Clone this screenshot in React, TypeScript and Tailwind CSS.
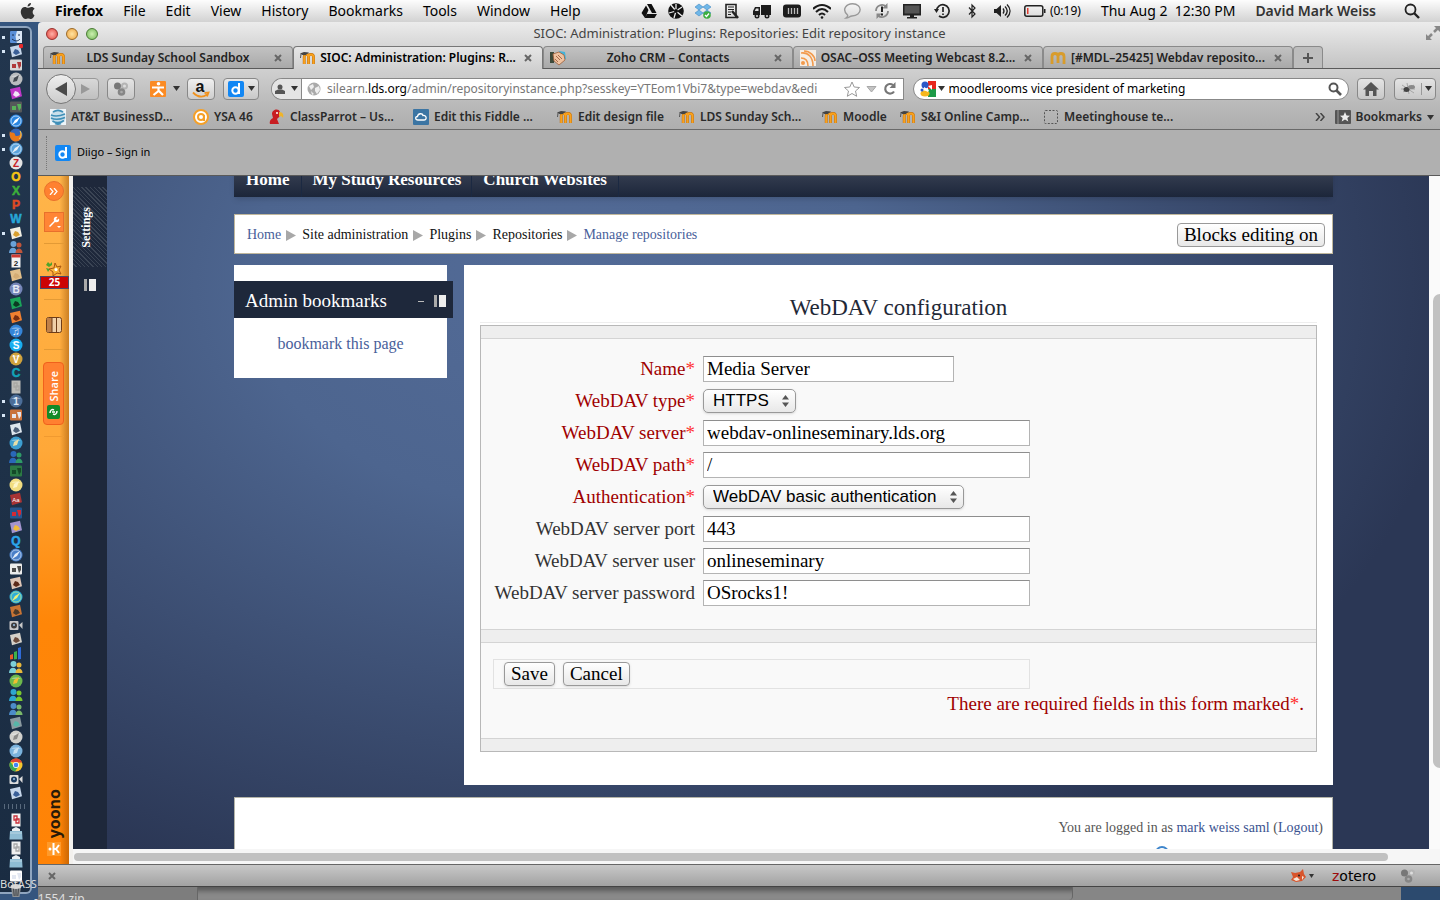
import React from "react";

type Kind =
  | "round"
  | "tile"
  | "tilt"
  | "letter"
  | "people"
  | "chrome"
  | "camera"
  | "folder"
  | "doc"
  | "trash"
  | "chart"
  | "compass"
  | "finder"
  | "fox";

interface DockItem {
  kind: Kind;
  a: string;
  b: string;
  glyph?: string;
  running?: boolean;
}

const dockItems: DockItem[] = [
  { kind: "finder", a: "#5a8fd8", b: "#dbe7f5", running: true },
  { kind: "tilt", a: "#c6d6ea", b: "#3a5f98", glyph: "badge", running: true },
  { kind: "tile", a: "#d8d8d8", b: "#b03a3a" },
  { kind: "round", a: "#b9bcbe", b: "#444a50" },
  { kind: "tilt", a: "#c038c8", b: "#f3e6f7" },
  { kind: "tile", a: "#55585a", b: "#58b05a" },
  { kind: "compass", a: "#2a86e0", b: "#ffffff" },
  { kind: "fox", a: "#e8781a", b: "#3566b8", running: true },
  { kind: "compass", a: "#5ba3dc", b: "#e9f1f6", running: true },
  { kind: "round", a: "#e4e4e4", b: "#c62026", glyph: "Z" },
  { kind: "letter", a: "#f5c414", b: "", glyph: "O" },
  { kind: "letter", a: "#3cae3a", b: "", glyph: "X" },
  { kind: "letter", a: "#e04a24", b: "", glyph: "P" },
  { kind: "letter", a: "#27a6d8", b: "", glyph: "W" },
  { kind: "tilt", a: "#f2efe4", b: "#d8a030", running: true },
  { kind: "people", a: "#6aa2d8", b: "#c0553a" },
  { kind: "doc", a: "#f4f4f4", b: "#cf3b34", glyph: "2" },
  { kind: "tilt", a: "#e2bf8a", b: "#d4ac74" },
  { kind: "round", a: "#7585b8", b: "#e6eaf5", glyph: "B" },
  { kind: "tilt", a: "#1aa55a", b: "#0b3a22" },
  { kind: "tilt", a: "#f08030", b: "#7a2e10" },
  { kind: "round", a: "#3585d8", b: "#ffffff", glyph: "♫" },
  { kind: "round", a: "#18aef0", b: "#ffffff", glyph: "S" },
  { kind: "round", a: "#cfa23c", b: "#ffffff", glyph: "V" },
  { kind: "letter", a: "#12a3b8", b: "", glyph: "C" },
  { kind: "doc", a: "#bcbcb8", b: "#a8a8a4" },
  { kind: "round", a: "#4b6d98", b: "#dfe8f4", glyph: "1", running: true },
  { kind: "tile", a: "#c9713c", b: "#e5e5ee", running: true },
  { kind: "tilt", a: "#dde6ee", b: "#4c5f78" },
  { kind: "round", a: "#3c9ed0", b: "#e8dfa8" },
  { kind: "people", a: "#2a68b8", b: "#2f9a68" },
  { kind: "tile", a: "#2c7a44", b: "#144a28" },
  { kind: "round", a: "#f1dd80", b: "#fdf5c8" },
  { kind: "tilt", a: "#a83434", b: "#a83434", glyph: "Aa" },
  { kind: "tile", a: "#25568f", b: "#d42a34" },
  { kind: "tilt", a: "#a495d0", b: "#f0bc3c" },
  { kind: "letter", a: "#2ba6ec", b: "", glyph: "Q" },
  { kind: "compass", a: "#4a7fc8", b: "#e5eefa" },
  { kind: "tile", a: "#ececec", b: "#4c4c4c" },
  { kind: "tilt", a: "#dec6b8", b: "#5c2a1a" },
  { kind: "compass", a: "#2faed8", b: "#e8f07a" },
  { kind: "tilt", a: "#c87434", b: "#4b3a2a" },
  { kind: "camera", a: "#c8c8c8", b: "#3e3e3e" },
  { kind: "tilt", a: "#d4d0c8", b: "#6b4a3a" },
  { kind: "chart", a: "#3eb04a", b: "#2f6bd8" },
  { kind: "people", a: "#7cd0d8", b: "#e8b83c" },
  { kind: "round", a: "#6cb84c", b: "#f0c030" },
  { kind: "people", a: "#2fa6d0", b: "#7ac830" },
  { kind: "people", a: "#4c8cc8", b: "#7ab86a" },
  { kind: "tilt", a: "#8a9aa0", b: "#57b5a8" },
  { kind: "round", a: "#d0d0cc", b: "#8a8a88" },
  { kind: "round", a: "#7ab2dc", b: "#c7e0f2" },
  { kind: "chrome", a: "", b: "" },
  { kind: "camera", a: "#dcdcdc", b: "#1c3c60" },
  { kind: "tilt", a: "#c6d6ea", b: "#3a5f98" },
];

const dockFiles: DockItem[] = [
  { kind: "doc", a: "#f4f4f4", b: "#c8303a" },
  { kind: "folder", a: "#8fbcd4", b: "#e9eef2" },
  { kind: "doc", a: "#f0f0f0", b: "#a8a8a8" },
  { kind: "folder", a: "#8fbcd4", b: "#e9eef2" },
  { kind: "tile", a: "#ffffff", b: "#e3e8f2" },
  { kind: "trash", a: "#8d9093", b: "#d6d6d6" },
];

const drawShape = ({ kind, a, b, glyph }: DockItem) => {
  switch (kind) {
    case "finder":
      return (
        <>
          <rect x="1" y="1" width="12" height="12" rx="1" fill={a} />
          <path d="M8 1h5v12H8C6.500 9 7 7 6.500 7 7 4 7.500 2.500 8 1z" fill={b} />
          <path d="M4 4v2M10 4v2M3 9c3 2.500 6 2.500 8 0" stroke="#1b2f50" fill="none" />
        </>
      );
    case "round":
      return (
        <>
          <circle cx="7" cy="7" r="6.500" fill={a} />
          <path d="M2 5a6 4 0 0 1 10 0" fill="#fff" opacity=".35" />
          {glyph ? (
            <text x="7" y="10.500" textAnchor="middle" fontSize="10" fontWeight="700" fill={b}>
              {glyph}
            </text>
          ) : (
            <path d="M4 10l1-4 5-3-2 6z" fill={b} />
          )}
        </>
      );
    case "compass":
      return (
        <>
          <circle cx="7" cy="7" r="6.500" fill={a} />
          <circle cx="7" cy="7" r="5" fill="none" stroke={b} opacity=".6" />
          <path d="M3 11l3-5 5-3-3 5z" fill={b} />
        </>
      );
    case "fox":
      return (
        <>
          <circle cx="7" cy="7" r="6.500" fill={b} />
          <path d="M1 3c0 2 2 1 4 2s0 3 3 3 4-2 3-5c3 4 2 10-4 10.500C2 13.500-.5 8 1 3z" fill={a} />
          <path d="M11 3c2 3 1 6-1 8" stroke="#ffd04a" fill="none" />
        </>
      );
    case "letter":
      return (
        <text x="7" y="11.300" textAnchor="middle" fontSize="12" fontWeight="700" fill={a} stroke={a} strokeWidth=".5">
          {glyph}
        </text>
      );
    case "people":
      return (
        <>
          <circle cx="4.500" cy="4" r="3" fill={a} />
          <path d="M0 13c0-7 8-7 8 0z" fill={a} />
          <circle cx="10" cy="5" r="2.500" fill={b} />
          <path d="M6.500 13c0-6 7-6 7 0z" fill={b} />
        </>
      );
    case "chrome":
      return (
        <>
          <circle cx="7" cy="7" r="6.500" fill="#f5c62e" />
          <path d="M1.300 3.800A6.500 6.500 0 0 1 13 4.500H7z" fill="#dd4437" />
          <path d="M1.300 3.800A6.500 6.500 0 0 0 6 13.400L9 9 4.500 8z" fill="#3aa757" />
          <circle cx="7" cy="7" r="3" fill="#fff" />
          <circle cx="7" cy="7" r="2.300" fill="#4285f4" />
        </>
      );
    case "camera":
      return (
        <>
          <rect x="0.500" y="3" width="9" height="9" rx="1" fill={a} />
          <path d="M10 7l3.500-3v7z" fill={a} />
          <circle cx="5" cy="7.500" r="3" fill={b} />
          <circle cx="5" cy="7" r="1" fill="#9cc4e8" />
        </>
      );
    case "folder":
      return (
        <>
          <path d="M3 5V2l4-2 4 2v3z" fill={b} />
          <path d="M1 4h12l.5 8.500H.5z" fill={a} />
          <path d="M1 6h12" stroke="#fff" opacity=".4" />
        </>
      );
    case "doc":
      return (
        <>
          <path d="M2.500.5h9v13h-9z" fill={a} />
          {glyph ? (
            <>
              <path d="M2.500.5h9v3h-9z" fill={b} />
              <text x="7" y="11.500" textAnchor="middle" fontSize="8" fontWeight="700" fill="#222">
                {glyph}
              </text>
            </>
          ) : (
            <path d="M5 3h3v4H5zM7 6h3v4H7z" stroke={b} strokeWidth="1.300" fill="none" />
          )}
        </>
      );
    case "trash":
      return (
        <>
          <path d="M2 4h10l-1.500 10h-7z" fill={a} />
          <path d="M4.500 5l.7 8M7 5v8M9.500 5l-.7 8" stroke="#3c4045" />
          <ellipse cx="7" cy="3.500" rx="5.500" ry="2.500" fill={b} />
        </>
      );
    case "chart":
      return (
        <>
          <path d="M1 9l3-1v5l-3 .5z" fill="#e85a2a" />
          <path d="M5 6l3-1v8l-3 .5z" fill={a} />
          <path d="M9 2l3-1v12l-3 .5z" fill={b} />
        </>
      );
    case "tilt":
      return (
        <>
          <path d="M1 3L11 .8l2 9.500-10 3z" fill={a} />
          <path d="M4 9l2-4 3 1 2 3-4 2z" fill={b} />
          {glyph === "badge" && <circle cx="12" cy="2" r="2.200" fill="#e82a2a" />}
          {glyph === "Aa" && (
            <text x="7" y="9.500" textAnchor="middle" fontSize="6" fill="#fff">
              Aa
            </text>
          )}
        </>
      );
    default:
      return (
        <>
          <rect x="1" y="1.500" width="12" height="11" rx="1" fill={a} />
          <rect x="3" y="6" width="4" height="4" fill={b} />
          <path d="M8 4h4v4l-2 3z" fill={b} />
        </>
      );
  }
};

const DockIcon: React.FC<{ item: DockItem }> = ({ item }) => (
  <li className="flex h-[14px] items-center">
    <span className={item.running ? "mr-1 ml-[2px] h-[3px] w-[3px] bg-[#d5e4f4]" : "mr-1 ml-[2px] w-[3px]"} />
    <svg width="14" height="14" viewBox="0 0 14 14">
      {drawShape(item)}
    </svg>
  </li>
);

const Dock = () => (
  <aside className="w-[38px] shrink-0 pt-1 pb-[6px] font-['Liberation_Sans',sans-serif]">
    <div className="flex h-full w-8 flex-col rounded-r-md border-2 border-l-0 border-[#8fa5bf] bg-linear-to-b from-[#22364e] to-[#1a2c42] pt-[2px]">
      <ul>
        {dockItems.map((item, i) => (
          <DockIcon key={i} item={item} />
        ))}
      </ul>
      <div className="my-1 ml-1 h-[5px] w-6 shrink-0 bg-[repeating-linear-gradient(90deg,#58697c_0_1px,transparent_1px_4px)]" />
      <ul>
        {dockFiles.map((item, i) => (
          <DockIcon key={i} item={item} />
        ))}
      </ul>
    </div>
  </aside>
);

const menus = ["File", "Edit", "View", "History", "Bookmarks", "Tools", "Window", "Help"];

const statusIcons: React.ReactNode[] = [
  <path key="drive" d="M6 1h4.500l5 9H11zM5 2.500L7.500 7 4 15l-3.500-5zM6 11h10l-2.500 4H4z" fill="#111" />,
  <g key="ball">
    <circle cx="8" cy="8" r="7.800" fill="#111" />
    <path d="M8 8L3 2M8 8l6-4M8 8l-7 2M8 8l6 5M8 8l-2 7M8 8V1" stroke="#eee" strokeWidth="1.300" />
    <circle cx="8" cy="8" r="2" fill="#111" />
  </g>,
  <g key="dropbox">
    <path d="M4 1l4 3-4 3-4-3zM12 1l4 3-4 3-4-3zM4 7l4 3-4 3-4-3zM12 7l4 3-4 3-4-3z" fill="#6fb7e8" stroke="#3f88c2" strokeWidth=".6" />
    <circle cx="12" cy="12" r="3.800" fill="#3cae3e" />
    <path d="M10 12l1.500 1.500L14 10.500" stroke="#fff" strokeWidth="1.300" fill="none" />
  </g>,
  <g key="note" stroke="#222" fill="none">
    <path d="M2 1.500h10v13H2z" strokeWidth="1.600" />
    <path d="M4 4h6M4 6.500h6M4 9h3M4 11.500h3" />
    <path d="M8 8l6 7" strokeWidth="2.500" />
  </g>,
  <g key="truck" fill="#1c1c1c">
    <path d="M7 2h10v10H7zM-1 8l2-4h5v8h-7z" />
    <circle cx="3" cy="13" r="2.500" />
    <circle cx="13" cy="13" r="2.500" />
    <path d="M2 5.500h2.500V8H.8z" fill="#ddd" />
    <circle cx="3" cy="13" r="1" fill="#ddd" />
    <circle cx="13" cy="13" r="1" fill="#ddd" />
  </g>,
  <g key="memory">
    <rect x="-1" y="1.500" width="18" height="13" rx="3" fill="#1c1c1c" />
    <path d="M4.500 5v6M7.500 5v6M10.500 5v6M13.500 5v6" stroke="#bbb" strokeWidth="1.300" />
  </g>,
  <g key="wifi" fill="none" stroke="#1c1c1c" strokeWidth="2">
    <path d="M-1 6c5.500-5.500 12.500-5.500 18 0M2 9c4-4 8-4 12 0M5 12c2-2 4-2 6 0" />
    <circle cx="8" cy="14.500" r="1.300" fill="#1c1c1c" stroke="none" />
  </g>,
  <path key="chat" d="M2 15c1.500-1 2-2 1.500-3C-3 6 3 .8 8.500.8c10.500 0 10 12-.5 12.200-2.500.3-3.500 2-6 2z" fill="none" stroke="#999" strokeWidth="1.400" />,
  <g key="sync" fill="none" stroke="#888" strokeWidth="1.800">
    <path d="M2 8a6 6 0 0 1 10-4.500M14 8A6 6 0 0 1 4 12.500" />
    <path d="M13.500 0v5.500H8zM2.500 16v-5.500H8z" fill="#888" stroke="none" />
    <path d="M8 3.500v5.500M8 10.500v2" stroke="#222" strokeWidth="2" />
  </g>,
  <g key="display">
    <path d="M-1 1h18v11.500H-1z" fill="#222" />
    <path d="M.5 2.500h15v8H.5z" fill="#555" />
    <path d="M6 12h4v2h3v1.500H3V14h3z" fill="#222" />
  </g>,
  <g key="machine" fill="none" stroke="#222" strokeWidth="1.700">
    <path d="M2.500 8A6.300 6.300 0 1 1 5 13" />
    <path d="M0 6h5L2.500 10z" fill="#222" stroke="none" />
    <path d="M9 4v5M9 10.500V12" />
  </g>,
  <path key="bluetooth" d="M5 4.500l6 6.500-3 3V2l3 3-6 6.500" fill="none" stroke="#222" strokeWidth="1.200" />,
  <g key="volume" fill="none" stroke="#222" strokeWidth="1.400">
    <path d="M0 6h2.500L7 2v12l-4.500-4H0z" fill="#222" stroke="none" />
    <path d="M9 5.500c1.500 2 1.500 3 0 5M11 3.500c3 3 3 6 0 9M13 1.500c4 4 4 9 0 13" />
  </g>,
];

const MenuBar = () => (
  <header className="flex h-[22px] shrink-0 items-center bg-linear-to-b from-[#fdfdfd] to-[#d2d2d2] pr-5 text-sm leading-none text-black">
    <svg className="ml-5 shrink-0" width="16" height="18" viewBox="0 0 16 18">
      <path d="M11 1c0 2-1.500 3.500-3.500 3.600C7.500 2.600 9 1.200 11 1zM14.500 13.200C13.500 15.800 12.300 17 11 17c-1 0-1.700-.6-2.800-.6S6.300 17 5.400 17C3 17 .5 12.500.8 9.300 1 6.500 3 5 4.800 5c1.300 0 2.300.8 3.200.8s2-.9 3.600-.8c1 0 2.300.6 3 1.700-2.700 1.800-2.300 5.400-.1 6.500z" fill="#333" />
    </svg>
    <nav className="ml-[19px] flex gap-5">
      <button className="font-bold">Firefox</button>
      {menus.map((m) => (
        <button key={m}>{m}</button>
      ))}
    </nav>
    <div className="ml-auto flex items-center">
      {statusIcons.map((icon, i) => (
        <span key={i} className={i < 3 ? "flex w-[27px] justify-center" : "flex w-[30px] justify-center"}>
          <svg width="18" height="18" viewBox="-1 -1 18 18">
            {icon}
          </svg>
        </span>
      ))}
      <svg className="ml-[7px]" width="22" height="12" viewBox="0 0 22 12">
        <rect x=".8" y=".8" width="18" height="10.400" rx="2" fill="none" stroke="#222" strokeWidth="1.500" />
        <path d="M20 4h1.500v4H20z" fill="#222" />
        <path d="M3 3h1.500v6H3z" fill="#e23b2e" />
      </svg>
      <span className="ml-1 text-xs leading-4">(0:19)</span>
      <span className="ml-5 whitespace-pre">Thu Aug 2  12:30 PM</span>
      <span className="ml-5 font-semibold text-[#333]">David Mark Weiss</span>
      <svg className="ml-7" width="16" height="16" viewBox="0 0 16 16" fill="none" stroke="#222">
        <circle cx="6.500" cy="6.500" r="5" strokeWidth="1.800" />
        <path d="M10 10l5 5" strokeWidth="2.400" />
      </svg>
    </div>
  </header>
);

const MoodleIcon = () => (
  <svg className="shrink-0" width="16" height="16" viewBox="0 0 16 16">
    <path d="M4.200 14V7c0-3.500 4.300-3.500 4.300 0v7M8.500 7c0-3.500 5-3.500 5 0v7" fill="none" stroke="#b8690c" strokeWidth="2.800" />
    <path d="M4.200 14V7c0-3.500 4.300-3.500 4.300 0v7M8.500 7c0-3.500 5-3.500 5 0v7" fill="none" stroke="#f9a11d" strokeWidth="2" />
    <path d="M0 3.500L4 2l5 .5-3.500 2.800-3-.3z" fill="#444" />
    <path d="M1 4L.5 8" stroke="#555" />
  </svg>
);

const DiigoIcon = () => (
  <svg className="shrink-0" width="16" height="16" viewBox="0 0 16 16">
    <rect width="16" height="16" rx="2" fill="#1287f4" />
    <circle cx="7.500" cy="9.500" r="3.200" fill="none" stroke="#fff" strokeWidth="2" />
    <path d="M11 2v11" stroke="#fff" strokeWidth="2" />
  </svg>
);

const Spheres = () => (
  <svg width="16" height="16" viewBox="0 0 16 16">
    <circle cx="4.500" cy="5" r="3.500" fill="#777" />
    <circle cx="11.500" cy="5" r="3.500" fill="#b4b4b4" />
    <circle cx="8.500" cy="11" r="3.800" fill="#868686" />
    <circle cx="11.500" cy="5" r="1.500" fill="#ddd" />
    <circle cx="8.500" cy="11" r="1.300" fill="#aaa" />
  </svg>
);

const Caret = () => (
  <svg width="7" height="5" viewBox="0 0 7 5">
    <path d="M0 0h7L3.500 5z" fill="#333" />
  </svg>
);

const tabs = [
  { title: "LDS Sunday School Sandbox", icon: "moodle" },
  { title: "SIOC: Administration: Plugins: R...", icon: "moodle", active: true },
  { title: "Zoho CRM – Contacts", icon: "zoho" },
  { title: "OSAC–OSS Meeting Webcast 8.2...", icon: "feed" },
  { title: "[#MDL–25425] Webdav reposito...", icon: "m" },
];

const TabIcon: React.FC<{ icon: string }> = ({ icon }) => {
  if (icon === "moodle") return <MoodleIcon />;
  return (
    <svg className="shrink-0" width="16" height="16" viewBox="0 0 16 16">
      {icon === "zoho" && (
        <>
          <path d="M0 2h4v11H0z" fill="#3d4a3a" />
          <path d="M9 1l6 1 1 7-4 1z" fill="#42b4dc" />
          <path d="M3 4l6-2 5 3 1 5-6 5-5-4z" fill="#efc2a0" stroke="#9d5f3a" strokeWidth=".8" />
          <path d="M6 6l4 4M8 5l4 4M5 9l3 3" stroke="#a86a48" />
        </>
      )}
      {icon === "feed" && (
        <>
          <rect width="16" height="16" fill="#f5ede4" />
          <path d="M1 3c7-1 12 4 12 13M1 8c5 0 7 3 7 8M4 1c6 0 11 5 11 10" fill="none" stroke="#f29a4c" strokeWidth="1.600" />
          <circle cx="3" cy="13" r="2" fill="#f29a4c" />
        </>
      )}
      {icon === "m" && (
        <path d="M2 14V6.500c0-4 6-4 6 0V13M8 6.500c0-4 6-4 6 0V14" fill="none" stroke="#d89c2c" strokeWidth="2.800" />
      )}
    </svg>
  );
};

const CloseGlyph = () => (
  <svg width="8" height="8" viewBox="0 0 8 8">
    <path d="M1 1l6 6M7 1L1 7" stroke="#666" strokeWidth="2" />
  </svg>
);

const TitleAndTabs = () => (
  <>
    <div className="relative flex h-6 shrink-0 items-center gap-2 rounded-tl bg-linear-to-b from-[#ececec] to-[#d6d6d6] pl-2">
      <button aria-label="Close" className="h-3 w-3 rounded-full border border-[#9a2f2c] bg-radial from-[#ffb0a8] to-[#dc3c3a]" />
      <button aria-label="Minimize" className="h-3 w-3 rounded-full border border-[#9c6a26] bg-radial from-[#ffe3a0] to-[#eca33a]" />
      <button aria-label="Zoom" className="h-3 w-3 rounded-full border border-[#4a7c34] bg-radial from-[#ccf0b0] to-[#74b858]" />
      <h1 className="flex-1 pr-[67px] text-center text-[13px] text-[#444]">
        SIOC: Administration: Plugins: Repositories: Edit repository instance
      </h1>
      <svg className="absolute top-1 right-0" width="14" height="14" viewBox="0 0 14 14">
        <path d="M8 0h6v6zM0 8v6h6z" fill="#888" />
        <path d="M12 2L8 6M2 12l4-4" stroke="#888" strokeWidth="2.500" />
      </svg>
    </div>
    <div className="flex h-[23px] shrink-0 border-b border-[#5a5a5a] bg-linear-to-b from-[#d6d6d6] to-[#c4c4c4] pl-[5px]">
      {tabs.map((tab) => (
        <div
          key={tab.title}
          className={
            tab.active
              ? "-mb-px flex w-[250px] items-center rounded-t border border-b-0 border-[#777] bg-linear-to-b from-[#e6e6e6] to-[#d0d0d0] px-[6px] text-xs font-semibold text-black"
              : "flex w-[250px] items-center rounded-t border border-b-0 border-[#8a8a8a] bg-linear-to-b from-[#c2c2c2] to-[#a9a9a9] px-[6px] text-xs font-semibold text-[#222]"
          }
        >
          <TabIcon icon={tab.icon} />
          <button className="min-w-0 flex-1 text-center whitespace-nowrap">{tab.title}</button>
          <button aria-label="Close tab" className="px-1">
            <CloseGlyph />
          </button>
        </div>
      ))}
      <button aria-label="New tab" className="flex w-[30px] items-center justify-center rounded-t border border-b-0 border-[#8a8a8a] bg-[#bdbdbd]">
        <svg width="10" height="10" viewBox="0 0 10 10">
          <path d="M5 0v10M0 5h10" stroke="#555" strokeWidth="2" />
        </svg>
      </button>
    </div>
  </>
);

const NavBar = () => (
  <div className="flex h-[38px] shrink-0 items-center bg-linear-to-b from-[#d0d0d0] to-[#b8b8b8] pt-px pr-1 pl-2">
    <button aria-label="Back" className="z-10 flex h-[30px] w-[30px] shrink-0 items-center justify-center rounded-full border border-[#777] bg-linear-to-b from-[#eee] to-[#ccc]">
      <svg width="12" height="14" viewBox="0 0 12 14">
        <path d="M0 7L12 0v14z" fill="#4a4a4a" />
      </svg>
    </button>
    <button aria-label="Forward" className="-ml-1 flex h-[22px] w-[27px] shrink-0 items-center justify-center rounded-r border border-[#999] bg-linear-to-b from-[#d8d8d8] to-[#c0c0c0]">
      <svg width="9" height="10" viewBox="0 0 9 10">
        <path d="M0 0l9 5-9 5z" fill="#999" />
      </svg>
    </button>
    <button aria-label="Proxy" className="ml-2 flex h-[22px] w-7 shrink-0 items-center justify-center rounded border border-[#888] bg-linear-to-b from-[#e4e4e4] to-[#c8c8c8]">
      <Spheres />
    </button>
    <button aria-label="Yoono" className="ml-[15px] flex w-[30px] shrink-0 items-center justify-between">
      <svg width="16" height="16" viewBox="0 0 16 16">
        <rect width="16" height="16" rx="1" fill="#fb8b24" />
        <circle cx="8.500" cy="2.800" r="1.800" fill="#fff" />
        <path d="M2 6.500h12M8.500 6v4l-5 4M8.500 9.500L13 14" stroke="#fff" strokeWidth="2.200" fill="none" />
      </svg>
      <Caret />
    </button>
    <button aria-label="Amazon" className="ml-[7px] flex h-[22px] w-7 shrink-0 items-center justify-center rounded border border-[#888] bg-linear-to-b from-[#f0f0f0] to-[#cecece] font-['Liberation_Sans',sans-serif]">
      <svg width="18" height="18" viewBox="0 0 18 18">
        <text x="8" y="12" textAnchor="middle" fontSize="16" fontWeight="700" fill="#111">
          a
        </text>
        <path d="M1 12.500c5 5 10 5 14 2M12.500 13l4-.5-1.500 4" stroke="#f0921e" strokeWidth="1.800" fill="none" />
      </svg>
    </button>
    <button aria-label="Diigo" className="ml-2 flex h-[22px] w-9 shrink-0 items-center justify-center gap-1 rounded border border-[#888] bg-linear-to-b from-[#e8e8e8] to-[#c8c8c8]">
      <DiigoIcon />
      <Caret />
    </button>
    <div className="ml-3 flex h-[22px] min-w-0 flex-[630] items-center overflow-hidden rounded-l-full rounded-r border border-[#888] bg-white">
      <div className="flex h-full w-[30px] shrink-0 items-center justify-center gap-[6px] border-r border-[#888] bg-[#e4e4e4]">
        <svg width="10" height="10" viewBox="0 0 10 10" fill="#555">
          <circle cx="5" cy="3" r="2.500" />
          <path d="M0 10V7l3-1.500h4L10 7v3z" />
        </svg>
        <Caret />
      </div>
      <svg className="ml-[5px] shrink-0" width="14" height="14" viewBox="0 0 14 14">
        <circle cx="7" cy="7" r="6.500" fill="#aaa" />
        <path d="M2 4l4-2 1 3-3 3zM8 6l4-2 1 4-3 4-2-3zM4 9l3 3-2 1z" fill="#eee" />
      </svg>
      <label htmlFor="url" className="sr-only">
        Address
      </label>
      <div className="relative ml-[6px] h-full min-w-0 flex-1">
        <input
          id="url"
          className="h-full w-full text-xs text-transparent outline-none"
          defaultValue="silearn.lds.org/admin/repositoryinstance.php?sesskey=YTEom1Vbi7&type=webdav&edi"
        />
        {/* the domain is darker than the rest of the address */}
        <div className="pointer-events-none absolute inset-0 flex items-center overflow-hidden bg-white text-xs whitespace-nowrap text-[#777]">
          silearn.<span className="text-black">lds.org</span>
          /admin/repositoryinstance.php?sesskey=YTEom1Vbi7&amp;type=webdav&amp;edi
        </div>
      </div>
      <svg className="mx-[6px] shrink-0" width="54" height="18" viewBox="0 0 54 18" fill="none">
        <path d="M9 2l2.200 5 5.300.5-4 3.500 1.200 5.300L9 13.500l-4.700 2.800L5.500 11l-4-3.500L6.800 7z" stroke="#999" />
        <path d="M24 6.500h9L28.500 12z" fill="#c4c4c4" stroke="#a8a8a8" />
        <path d="M51 11.500A4.800 4.800 0 1 1 50 5" stroke="#777" strokeWidth="2.200" />
        <path d="M52.500 2v6h-6z" fill="#777" />
      </svg>
    </div>
    <div className="ml-[9px] flex h-[22px] min-w-0 flex-[422] items-center rounded-full border border-[#888] bg-white px-[6px]">
      <svg className="shrink-0" width="16" height="16" viewBox="0 0 16 16">
        <path d="M8 0h8v8H8z" fill="#e8281e" />
        <path d="M8 8h8v8H8z" fill="#1d9a48" />
        <circle cx="5" cy="4" r="3.500" fill="#2a58c8" />
        <path d="M8 5l4-1v5z" fill="#fff" />
        <ellipse cx="5" cy="12.500" rx="4.500" ry="3" fill="#f7b71c" />
        <path d="M4 6l5 3-1 2-4-2z" fill="#fff" />
        <circle cx="2" cy="9" r="1.500" fill="#2a58c8" />
      </svg>
      <span className="ml-[2px] shrink-0">
        <Caret />
      </span>
      <label htmlFor="search" className="sr-only">
        Search
      </label>
      <input id="search" className="ml-1 min-w-0 flex-1 text-xs text-black outline-none" defaultValue="moodlerooms vice president of marketing" />
      <svg className="shrink-0" width="14" height="14" viewBox="0 0 14 14" fill="none" stroke="#555">
        <circle cx="5.500" cy="5.500" r="4" strokeWidth="2" />
        <path d="M8.500 8.500L13 13" strokeWidth="2.600" />
      </svg>
    </div>
    <button aria-label="Home" className="ml-2 flex h-[22px] w-7 shrink-0 items-center justify-center rounded border border-[#888] bg-linear-to-b from-[#e4e4e4] to-[#c8c8c8]">
      <svg width="16" height="14" viewBox="0 0 16 14" fill="#555">
        <path d="M8 0l8 7.500h-2.500V14H10V9H6v5H2.500V7.500H0z" />
      </svg>
    </button>
    <button aria-label="Firebug" className="ml-[9px] flex h-[22px] w-[42px] shrink-0 items-center justify-between rounded border border-[#888] bg-linear-to-b from-[#e4e4e4] to-[#c8c8c8] pr-[3px] pl-[6px]">
      <svg width="16" height="14" viewBox="0 0 16 14">
        <path d="M1 3l12 8M2 10L13 3M6 1l2 11M0 7h14" stroke="#999" strokeWidth=".8" />
        <ellipse cx="5.500" cy="7.500" rx="3" ry="2.500" fill="#444" />
        <ellipse cx="10.500" cy="5" rx="3.500" ry="2" fill="#8a8a8a" />
      </svg>
      <span className="flex h-3 items-center border-l border-[#999] pl-[3px]">
        <Caret />
      </span>
    </button>
  </div>
);

const bookmarks = [
  { label: "AT&T BusinessD...", icon: "att", width: "w-[143px]" },
  { label: "YSA 46", icon: "ysa", width: "w-[76px]" },
  { label: "ClassParrot – Us...", icon: "parrot", width: "w-[144px]" },
  { label: "Edit this Fiddle ...", icon: "cloud", width: "w-[144px]" },
  { label: "Edit design file", icon: "moodle", width: "w-[122px]" },
  { label: "LDS Sunday Sch...", icon: "moodle", width: "w-[143px]" },
  { label: "Moodle", icon: "moodle", width: "w-[78px]" },
  { label: "S&I Online Camp...", icon: "moodle", width: "w-[143px]" },
  { label: "Meetinghouse te...", icon: "blank", width: "w-[143px]" },
];

const BookmarkIcon: React.FC<{ icon: string }> = ({ icon }) => {
  if (icon === "moodle") return <MoodleIcon />;
  return (
    <svg className="shrink-0" width="16" height="16" viewBox="0 0 16 16">
      {icon === "att" && (
        <>
          <rect width="16" height="16" fill="#eef4f8" />
          <circle cx="8" cy="8" r="7.500" fill="#c9dfeb" />
          <path d="M3 3c3-2 7-2 10 0M1 6c5 2 9 1 14-1M1 9c5 2.500 9 1.500 14-.5M2.500 12c4 2.500 8 2 11.500-.5M5 14.500c2 .8 4 .8 6 0" stroke="#3f8fb8" strokeWidth="1.600" fill="none" />
        </>
      )}
      {icon === "ysa" && (
        <>
          <circle cx="8" cy="8" r="7" fill="#fff" stroke="#f5a028" strokeWidth="2" />
          <circle cx="8" cy="8" r="3" fill="none" stroke="#f5a028" strokeWidth="2" />
          <path d="M11 6v6" stroke="#f5a028" strokeWidth="2" />
        </>
      )}
      {icon === "parrot" && (
        <>
          <path d="M3 5c0-5 7-6 8-2v4l-3 3 2 5H1c-1-3 1-5 3-6z" fill="#c81e22" />
          <path d="M10 3c4 0 5 3 4 6-1-2-3-2-4-1z" fill="#f0b428" />
          <circle cx="8" cy="4" r="1" fill="#fff" />
        </>
      )}
      {icon === "cloud" && (
        <>
          <rect width="16" height="16" rx="1" fill="#3c75a3" />
          <path d="M5 11c-3 0-3-3.500-.5-3.500C5 4 9.500 4 10 6.500c4-.5 4 4.500 1 4.500z" fill="none" stroke="#fff" strokeWidth="1.300" />
        </>
      )}
      {icon === "blank" && <rect x="1.500" y="1.500" width="13" height="13" rx="1" fill="none" stroke="#555" strokeDasharray="2 1.500" />}
    </svg>
  );
};

const BookmarksBar = () => (
  <nav className="flex h-[23px] shrink-0 items-center border-b border-[#6a6a6a] bg-linear-to-b from-[#b8b8b8] to-[#aeaeae] pb-[2px] pl-3 text-xs font-semibold text-[#2a2a2a]">
    {bookmarks.map((b) => (
      <a key={b.label} href="#" className={`flex shrink-0 items-center gap-[5px] whitespace-nowrap ${b.width}`}>
        <BookmarkIcon icon={b.icon} />
        {b.label}
      </a>
    ))}
    <button aria-label="More bookmarks" className="ml-auto">
      <svg width="10" height="8" viewBox="0 0 10 8" fill="none" stroke="#444" strokeWidth="1.500">
        <path d="M1 0l3.500 4L1 8M5.500 0L9 4 5.500 8" />
      </svg>
    </button>
    <button className="mr-[6px] ml-[10px] flex items-center gap-[5px]">
      <svg width="16" height="14" viewBox="0 0 16 14">
        <rect width="16" height="14" rx="1" fill="#555" />
        <path d="M3 0v14" stroke="#999" />
        <path d="M10 2l1.500 3.500 3.500.2-2.700 2.200 1 3.600L10 9.500l-3.300 2 1-3.600L5 5.700l3.500-.2z" fill="#eee" />
      </svg>
      Bookmarks
      <Caret />
    </button>
  </nav>
);

const YoonoSidebar = () => (
  <aside className="flex w-[31px] shrink-0 flex-col items-center bg-[linear-gradient(90deg,transparent_70%,rgba(140,70,0,0.45)),linear-gradient(#ffb54a,#ffa838_40%,#ff8608_65%,#ff8306)] pt-[5px] pb-2 font-['Open_Sans',sans-serif]">
    <button aria-label="Expand" className="flex h-5 w-5 items-center justify-center rounded-full border border-[#e8702c] bg-[#ff8130]">
      <svg width="9" height="7" viewBox="0 0 9 7" fill="none" stroke="#fff" strokeWidth="1.200">
        <path d="M1 0l3 3.500L1 7M5 0l3 3.500L5 7" />
      </svg>
    </button>
    <button aria-label="Tools" className="mt-[11px] flex h-5 w-5 items-center justify-center border border-[#e8702c] bg-[#ff8535]">
      <svg width="14" height="14" viewBox="0 0 14 14">
        <path d="M2 11l5-5c-1-3 1-5 3.500-4L9 4l1 1 2-1.500C13 6 11 8 8 7l-5 5z" fill="#fff" />
        <path d="M10 11h4l-2 2z" fill="#fff" />
      </svg>
    </button>
    <hr className="mt-[11px] w-5 border-[#e39a35]" />
    <svg className="mt-[17px]" width="16" height="15" viewBox="0 0 16 15">
      <path d="M2 1l2 2 2-2 0 3-3 2-3-2z" fill="#4da42c" />
      <path d="M0 7l4 1-2 3z" fill="#4da42c" />
      <path d="M9 2l2 4 4-1-2 4 2 4-4-1-4 3v-4L3 8l5-1z" fill="#f8b438" stroke="#a85410" />
      <circle cx="10" cy="8.500" r="1.500" fill="#fff" />
    </svg>
    <span className="h-[13px] w-[29px] self-end border border-[#4a4a6a] bg-[#cc0404] text-center text-[10px] leading-[11px] font-bold text-white">25</span>
    <hr className="mt-[10px] w-5 border-[#e39a35]" />
    <svg className="mt-[17px]" width="16" height="16" viewBox="0 0 16 16">
      <rect x=".5" y=".5" width="15" height="15" rx="2" fill="#f0d0a8" stroke="#6d3c18" />
      <path d="M1 1h5v14H1z" fill="#c08048" />
      <path d="M6 1v14M10.500 1v14" stroke="#6d3c18" />
    </svg>
    <hr className="mt-4 w-5 border-[#e39a35]" />
    <button className="mt-3 flex h-[63px] w-[21px] flex-col items-center justify-between rounded border border-[#f0601c] bg-[#ff8030] pt-2 pb-[5px] text-[11px] font-semibold text-white">
      <span className="rotate-180 leading-none [writing-mode:vertical-rl]">Share</span>
      <svg width="13" height="14" viewBox="0 0 13 14">
        <rect width="13" height="14" rx="2" fill="#128a28" />
        <path d="M3 8c0-3 2-4 4-3M10 6c0 3-2 4-4 3M5 7h3" stroke="#fff" strokeWidth="1.500" fill="none" />
      </svg>
    </button>
    <hr className="mt-[11px] w-5 border-[#f09a30]" />
    <span className="mt-auto rotate-180 text-base leading-none font-bold text-[#2a1a08] [writing-mode:vertical-rl]">yoono</span>
    <svg className="mt-1" width="14" height="14" viewBox="0 0 14 14">
      <rect width="14" height="14" fill="#ff9a2a" />
      <circle cx="3" cy="7" r="1.500" fill="#fff" />
      <path d="M6.500 1v12M6.500 7H9l3-4M9 7l3 4" stroke="#fff" strokeWidth="2" fill="none" />
    </svg>
  </aside>
);

const DockGlyph = () => (
  <svg width="12" height="12" viewBox="0 0 12 12">
    <path d="M0 0h3v12H0z" fill="#aaa" />
    <path d="M5 0h7v12H5z" fill="#eee" />
  </svg>
);

const fields = [
  { id: "name", label: "Name", value: "Media Server", required: true, short: true },
  { id: "type", label: "WebDAV type", value: "HTTPS", required: true, select: true },
  { id: "server", label: "WebDAV server", value: "webdav-onlineseminary.lds.org", required: true },
  { id: "path", label: "WebDAV path", value: "/", required: true },
  { id: "auth", label: "Authentication", value: "WebDAV basic authentication", required: true, select: true },
  { id: "port", label: "WebDAV server port", value: "443" },
  { id: "user", label: "WebDAV server user", value: "onlineseminary" },
  { id: "password", label: "WebDAV server password", value: "OSrocks1!" },
];

const Star = () => <span className="text-[#ff3030]">*</span>;

const RepositoryForm = () => (
  <form className="border border-[#b8b8b8] bg-[#eee] py-3">
    <div className="flex flex-col gap-[6px] border-y border-[#d4d4d4] bg-[#f9f9f9] pt-[17px] pb-[23px]">
      {fields.map((f) => (
        <div key={f.id} className="flex h-[26px] items-center">
          <label htmlFor={f.id} className={f.required ? "w-[214px] text-right whitespace-nowrap text-[#a00000]" : "w-[214px] text-right whitespace-nowrap text-[#333]"}>
            {f.label}
            {f.required && <Star />}
          </label>
          {f.select ? (
            <div className="relative ml-2">
              <select
                id={f.id}
                className="block h-6 appearance-none rounded-[5px] border border-[#999] bg-linear-to-b from-white to-[#e8e8e8] pr-[26px] pl-[9px] font-['Liberation_Sans',sans-serif] text-[17px] leading-[22px] text-black shadow-sm"
                defaultValue={f.value}
              >
                <option>{f.value}</option>
              </select>
              <svg className="pointer-events-none absolute top-[6px] right-[7px]" width="7" height="12" viewBox="0 0 7 12" fill="#555">
                <path d="M3.500 0L7 4.500H0zM0 7.500h7L3.500 12z" />
              </svg>
            </div>
          ) : (
            <input
              id={f.id}
              defaultValue={f.value}
              className={
                f.short
                  ? "ml-2 h-[26px] w-[251px] border border-[#b4b4b4] border-t-[#8e8e8e] bg-white px-[3px] text-black"
                  : "ml-2 h-[26px] w-[327px] border border-[#b4b4b4] border-t-[#8e8e8e] bg-white px-[3px] text-black"
              }
            />
          )}
        </div>
      ))}
    </div>
    <div className="mt-3 border-y border-[#d4d4d4] bg-[#f9f9f9] px-3 pt-4 pb-5">
      <div className="flex h-[30px] w-[537px] items-center gap-2 border border-[#e2e2e2] px-[10px] text-black">
        <button type="submit" className="h-6 rounded border border-[#999] bg-linear-to-b from-white to-[#e8e8e8] px-[6px] leading-5 shadow-sm">
          Save
        </button>
        <button type="button" className="h-6 rounded border border-[#999] bg-linear-to-b from-white to-[#e8e8e8] px-[6px] leading-5 shadow-sm">
          Cancel
        </button>
      </div>
      <p className="pt-px text-right leading-7 text-[#a00000]">
        There are required fields in this form marked
        <Star />.
      </p>
    </div>
  </form>
);

const crumbs = [
  { label: "Home", link: true },
  { label: "Site administration" },
  { label: "Plugins" },
  { label: "Repositories" },
  { label: "Manage repositories", link: true },
];

const SitePage = () => (
  <div className="flex min-w-0 flex-1 overflow-hidden bg-[radial-gradient(ellipse_900px_640px_at_36%_16%,#536b97,#4d658f_35%,#2b3755)] font-['Liberation_Serif',serif]">
    <div className="flex w-[34px] shrink-0 flex-col items-center bg-[#1e283b] pt-[11px]">
      <button className="flex h-20 w-full items-center justify-center bg-[repeating-linear-gradient(45deg,#1e283b_0_2px,#3a4454_2px_3px)]">
        <span className="rotate-180 pl-2 text-xs font-bold text-white [writing-mode:vertical-rl]">Settings</span>
      </button>
      <button aria-label="Undock all" className="mt-3">
        <DockGlyph />
      </button>
    </div>
    <div className="min-w-0 flex-1 pr-24 pl-[127px]">
      <nav className="-mt-[21px] flex h-[42px] items-stretch bg-linear-to-b from-[#4a5163] to-[#1c263a] pt-2 text-[17px] font-bold text-white shadow-md">
        <a href="#" className="flex items-center border-r border-[#1b2942] px-3">Home</a>
        <a href="#" className="flex items-center border-r border-[#1b2942] px-[10px]">My Study Resources</a>
        <a href="#" className="flex items-center border-r border-[#1b2942] px-[11px]">Church Websites</a>
      </nav>
      <div className="mt-[17px] flex h-10 items-center border border-[#c0b79c] bg-white pt-[2px] pr-[7px] pl-3 text-sm">
        {crumbs.map((c, i) => (
          <React.Fragment key={c.label}>
            {i > 0 && (
              <svg className="mr-[6px] ml-[5px] shrink-0" width="10" height="11" viewBox="0 0 10 11">
                <path d="M0 0l10 5.500L0 11z" fill="#a8a8a8" />
              </svg>
            )}
            {c.link ? (
              <a href="#" className="text-[#48609a]">{c.label}</a>
            ) : (
              <span className="text-[#111]">{c.label}</span>
            )}
          </React.Fragment>
        ))}
        <button className="ml-auto h-6 rounded border border-[#999] bg-linear-to-b from-white to-[#e8e8e8] px-[6px] text-[19px] leading-5 text-black">
          Blocks editing on
        </button>
      </div>
      <div className="mt-[11px] flex items-start gap-[17px]">
        <section className="h-[113px] w-[213px] shrink-0 bg-white pt-4">
          <div className="-mr-[6px] flex h-[37px] items-center bg-[#1e283b] pt-[3px] pr-[7px] pl-[11px] text-white">
            <h2 className="text-[19px]">Admin bookmarks</h2>
            <button aria-label="Collapse" className="mr-[10px] ml-auto h-px w-[6px] bg-[#bbb]" />
            <DockGlyph />
          </div>
          <p className="pt-[14px] text-center">
            <a href="#" className="text-base text-[#48609a]">bookmark this page</a>
          </p>
        </section>
        <main className="min-w-0 flex-1 bg-white px-4 pt-7 pb-[33px] text-[19px]">
          <h2 className="mb-[2px] border-b border-[#eee] text-center text-[23px] leading-[29px] text-[#1f2937]">WebDAV configuration</h2>
          <RepositoryForm />
        </main>
      </div>
      <footer className="mt-3 h-40 border border-[#b4b4a8] bg-white pt-5 pr-[9px] text-right text-sm text-[#555]">
        You are logged in as{" "}
        <a href="#" className="text-[#3a5290]">mark weiss saml</a> (<a href="#" className="text-[#3a5290]">Logout</a>)
        <div className="flex justify-end pt-2 pr-[104px]">
          <svg className="mr-[50px]" width="14" height="14" viewBox="0 0 14 14">
            <circle cx="7" cy="7" r="6" fill="none" stroke="#3f86cc" strokeWidth="2" />
          </svg>
        </div>
      </footer>
    </div>
  </div>
);

const StatusBar = () => (
  <div className="flex h-[23px] shrink-0 items-center border-t border-b border-[#666] border-b-[#444] bg-linear-to-b from-[#c8c8c8] to-[#a2a2a2] pr-6 pl-[10px]">
    <button aria-label="Close add-on bar">
      <CloseGlyph />
    </button>
    <svg className="ml-auto" width="16" height="14" viewBox="0 0 16 14">
      <path d="M1 3l4 1 5-1 3-3 1 5 2 3-4 4-6 1-5-2 2-3z" fill="#d8552c" />
      <path d="M7 8l3 3-4 1-3-2zM12 7l2 1-2 3z" fill="#f6e6d8" />
      <circle cx="9" cy="6.500" r="1" fill="#222" />
    </svg>
    <span className="ml-[3px]">
      <svg width="5" height="4" viewBox="0 0 5 4">
        <path d="M0 0h5L2.500 4z" fill="#333" />
      </svg>
    </span>
    <button className="ml-[18px] font-['DejaVu_Sans',sans-serif] text-sm leading-none text-black">
      <span className="text-[#9c0c0c]">z</span>otero
    </button>
    <span className="ml-6">
      <Spheres />
    </span>
  </div>
);

const App: React.FC = () => (
  <div className="relative flex h-screen flex-col overflow-hidden bg-[#35557e] font-['Noto_Sans',sans-serif]">
    <MenuBar />
    <div className="flex min-h-0 flex-1">
      <Dock />
      <div className="flex min-w-0 flex-1 flex-col">
        <TitleAndTabs />
        <NavBar />
        <BookmarksBar />
        <div className="flex h-[46px] shrink-0 items-center border-b border-[#5a5a5a] bg-[#b0b0b0] pl-2 text-[11px] text-black">
          <span className="mr-2 h-[34px] border-l border-dotted border-[#777]" />
          <a href="#" className="flex items-center gap-[6px]">
            <DiigoIcon />
            Diigo – Sign in
          </a>
        </div>
        <div className="flex min-h-0 flex-1">
          <YoonoSidebar />
          <div className="w-1 shrink-0 bg-[#f3f1ee]" />
          <div className="flex min-w-0 flex-1 flex-col">
            <div className="flex min-h-0 flex-1">
              <SitePage />
              <div className="w-[11px] shrink-0 bg-[#fafafa] pt-[118px] pl-1">
                <div className="h-[474px] rounded-l-full bg-[#c1c1c1]" />
              </div>
            </div>
            <div className="flex h-[15px] shrink-0 items-center bg-[#f6f6f6] pr-[52px] pl-[1px]">
              <div className="h-2 flex-1 rounded-full bg-[#c1c1c1]" />
            </div>
          </div>
        </div>
        <StatusBar />
        <div className="flex h-[13px] shrink-0 bg-[#8a8a8a] shadow-[inset_0_4px_5px_rgba(0,0,0,0.35)]">
          <div className="w-[160px] shrink-0 border-r border-[#666] bg-[#7d7d7d]" />
          <div className="flex-1 rounded-b border-r border-[#666]" />
          <div className="w-[328px] shrink-0 bg-[#868686]" />
          <div className="w-[39px] shrink-0 bg-[#2c4a6e]" />
        </div>
      </div>
    </div>
    {/* desktop file names that show round the dock */}
    <span className="absolute bottom-[11px] left-0 text-[11px] leading-none text-[#ddd]">BotASS</span>
    <span className="absolute -bottom-[5px] left-[34px] text-xs leading-none text-[#ddd]">-1554.zip</span>
  </div>
);

export default App;
